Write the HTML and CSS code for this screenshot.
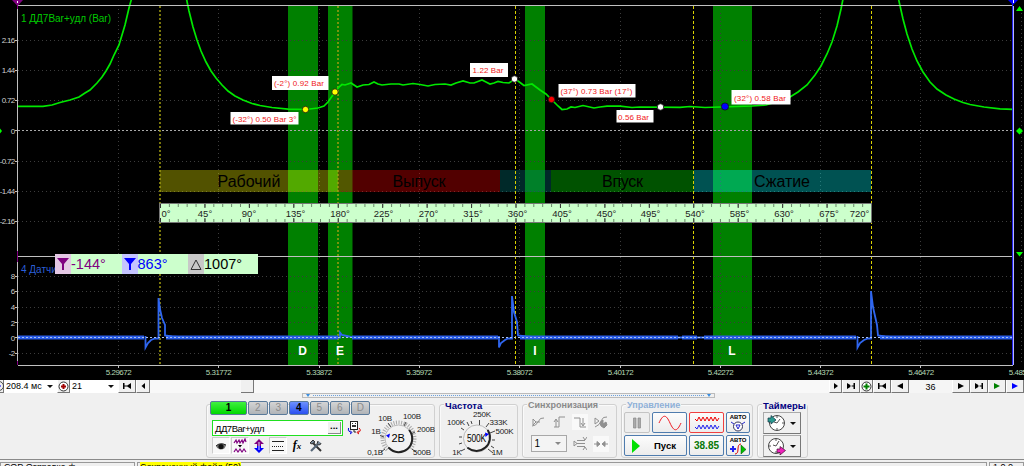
FILE: index.html
```
<!DOCTYPE html>
<html lang="ru">
<head>
    <meta charset="UTF-8">
    <title>Осциллограф</title>
    <link rel="stylesheet" href="styles.css">
</head>
<body>
<div class="app">
    <div class="scope">
        <svg class="plot" width="1024" height="380" viewBox="0 0 1024 380">
            <!-- зоны -->
            <g class="zones">
                <rect x="288" y="6" width="30" height="359"/>
                <rect x="328" y="6" width="24.500" height="359"/>
                <rect x="525" y="6" width="20" height="359"/>
                <rect x="713" y="6" width="39" height="359"/>
            </g>
            <!-- сетка -->
            <path class="grid" d="M18 40.500H1013M18 70.500H1013M18 100.500H1013M18 161.500H1013M18 191.500H1013M18 221.500H1013M18 276.500H1013M18 291.500H1013M18 307.500H1013M18 322.500H1013M18 353.500H1013"/>
            <path class="grid" d="M118.500 9V365M218.500 9V365M319.500 9V365M419.500 9V365M519.500 9V365M620.500 9V365M720.500 9V365M820.500 9V365M920.500 9V365M1021.500 9V365"/>
            <path class="zero" d="M18 130.500H1013"/>

            <!-- такты -->
            <g class="strokes">
                <rect x="160" y="170" width="178" height="22" fill="#ff0"/>
                <rect x="338" y="170" width="162" height="22" fill="#f00"/>
                <rect x="500" y="170" width="51" height="22" fill="#008080"/>
                <rect x="551" y="170" width="143" height="22" fill="#0f0"/>
                <rect x="694" y="170" width="177" height="22" fill="#0ff"/>
            </g>
            <g class="stroke-names">
                <text x="249" y="187" textLength="63">Рабочий</text>
                <text x="419" y="187" textLength="53">Выпуск</text>
                <text x="622.500" y="187" textLength="41">Впуск</text>
                <text x="782" y="187" textLength="56">Сжатие</text>
            </g>

            <path class="angle wide" d="M160 6V365M338 6V365"/>
            <path class="angle" d="M515.500 6V365M693.500 6V365M871.500 6V365"/>

            <!-- шкала углов -->
            <rect class="ruler" x="159.500" y="203.500" width="712" height="19"/>
            <path class="tick minor" d="M160 205.500H871M160 220.500H871"/>
            <path class="tick major" d="M160 206H871M160 220H871"/>
            <g class="ruler-text">
                <text x="161.500" y="217">0°</text>
                <text x="205" y="217">45°</text><text x="249" y="217">90°</text>
                <text x="295.500" y="217">135°</text><text x="340" y="217">180°</text>
                <text x="383.500" y="217">225°</text><text x="428.500" y="217">270°</text>
                <text x="473" y="217">315°</text><text x="517.500" y="217">360°</text>
                <text x="562" y="217">405°</text><text x="606.500" y="217">450°</text>
                <text x="650.500" y="217">495°</text><text x="695" y="217">540°</text>
                <text x="739.500" y="217">585°</text><text x="784" y="217">630°</text>
                <text x="829" y="217">675°</text><text x="859.500" y="217">720°</text>
            </g>

            <!-- давление -->
            <path class="pressure" d="M18 106.300H43L52 105L60 102.500L70 100L79 97L85 93L90 90L97 83L102 77L106 71L110 64L114 55L119 45L122 35L125 25L129 8L131.500 -1"/>
            <path class="pressure" d="M186.500 -1L189 11L193 27L197 40L201 51L206 62L211 71L216 78L222 85L228 91L235 96L243 100L252 103.500L260 105.500L272 107.500L288 109.200L306 109.500L318 108L324 106L328 102L335 92L339 87L342 84.500L345 85L348 84L351 83L354 85L357 87L363 85L369 84.500L374 82L378 84L382 85L391 84L399 84L403 85L413 83.500L420 84.500L428 86L435 84.500L445 84L451 85L456 83L463 81L470 83L474 83L482 80L486 82L490 84L494 83L498 81.500L503 82.500L509 83L515 79L518 81L524 85.500L532 84L540 90L546 94L551 99L558 106L562 109.500L567 109L571 107L575 107.500L583 105.500L594 108L600 107L607 106.200H620L632 107.500L640 107L680 107.300L690 106.500L705 107.500L752 106L766 105L776 102L790 97L798 92L807 85L815 75L821 66L827 54L832 42L837 26L841 9L843 -1"/>
            <path class="pressure" d="M898.500 -1L903 19L907 34L912 49L917 61L923 72L930 82L937 89L946 95L954 99L963 102.500L970 104.500L984 107L1000 108.800L1013 109.300"/>

            <!-- синхронизация -->
            <path class="sync-base" d="M18 337.500H144M166 337.500H338M352 337.500H498M520 337.500H678M682 337.500H697M704 337.500H856M880 337.500H1013"/>
            <path class="sync" d="M145.500 336V347.500L148 343L151 340L155 338.500H158.500V298L160 309L162 318L165 325V335.500L172 336.500L184 337.500"/>
            <path class="sync" d="M330 337.500H340V332.500L342 335L349 336.500L353 337.500"/>
            <path class="sync" d="M499 336V347.500L501 343L505 340L508 338.500H512V296L514 312L517 322L518 335.500L526 336.500L538 337.500"/>
            <path class="sync" d="M857.500 336V347.500L860 343L864 340L868 338.500H871V291L873 307L877 325L878 335.500L885 336.500L896 337.500M677 337.500H706"/>
            <path class="sync-dots" d="M18 337.500H1013"/>

            <!-- рамка и оси -->
            <path class="frame" d="M18 5.500H1013M18 256.500H1013M17.500 8V365M18 365.500H1013M118.500 365V368M218.500 365V368M319.500 365V368M419.500 365V368M519.500 365V368M620.500 365V368M720.500 365V368M820.500 365V368M920.500 365V368"/>
            <path class="frame" d="M15 40.500H17M15 70.500H17M15 100.500H17M15 130.500H17M15 161.500H17M15 191.500H17M15 221.500H17M15 276.500H17M15 291.500H17M15 307.500H17M15 322.500H17M15 337.500H17M15 353.500H17"/>
            <path stroke="#800080" d="M17.500 0V9M17.500 251V262M17.500 361V365"/>
            <path fill="#800080" d="M12 0H23L17.500 6Z"/>
            <path stroke="#fff" d="M17.500 1V3"/>
            <path stroke="#2222ee" d="M1012.500 4V365"/>
            <path stroke="#b4b4ff" d="M1013.500 6V365"/>
            <path fill="#0000ff" d="M1008 0H1018L1013 5Z"/>
            <path stroke="#fff" d="M1013.500 0V3"/>
            <path fill="#00ff00" d="M1019.500 6L1023 11H1016ZM1016 252H1023L1019.500 256.500ZM1016 131L1019.500 127.500L1023 131L1019.500 134.500ZM0 128.500L2 131L0 133.500Z"/>

            <g class="axis">
                <text x="14.500" y="43">2.16</text><text x="14.500" y="73">1.44</text>
                <text x="14.500" y="103">0.72</text><text x="14.500" y="133.500">0</text>
                <text x="14.500" y="164">-0.72</text><text x="14.500" y="194">-1.44</text>
                <text x="14.500" y="224">-2.16</text>
                <text x="14.500" y="279">8</text><text x="14.500" y="294">6</text>
                <text x="14.500" y="310">4</text><text x="14.500" y="325.500">2</text>
                <text x="14.500" y="340.500">0</text><text x="14.500" y="356">-2</text>
            </g>
            <g class="time">
                <text x="118.500" y="375">5.29672</text><text x="218.500" y="375">5.31772</text>
                <text x="319" y="375">5.33872</text><text x="419" y="375">5.35972</text>
                <text x="519.500" y="375">5.38072</text><text x="620.500" y="375">5.40172</text>
                <text x="720.500" y="375">5.42272</text><text x="820.500" y="375">5.44372</text>
                <text x="921" y="375">5.46472</text><text x="1021.500" y="375">5.48572</text>
            </g>
            <text class="channel" x="21" y="22" fill="#00c800" textLength="90">1 ДД7Bar+удл (Bar)</text>
            <text class="channel" x="21" y="273" fill="#2b5fd8">4 Датчик</text>
            <g class="zone-names">
                <text x="302.500" y="355">D</text><text x="340" y="355">E</text>
                <text x="535" y="355">I</text><text x="732" y="355">L</text>
            </g>

            <!-- метки -->
            <g class="note">
                <rect x="272" y="76" width="56.500" height="14"/><text x="274" y="86" textLength="50">(-2°) 0.92 Bar</text>
                <rect x="230.500" y="112" width="68" height="12.500"/><text x="232.500" y="121.500" textLength="64">(-32°) 0.50 Bar 3°</text>
                <rect x="470" y="63" width="38" height="14"/><text x="472.500" y="73" textLength="31">1.22 Bar</text>
                <rect x="558.500" y="84" width="77" height="13.500"/><text x="560.500" y="93.500" textLength="72">(37°) 0.73 Bar (17°)</text>
                <rect x="616.500" y="110" width="37" height="12.500"/><text x="618" y="119.500" textLength="31">0.56 Bar</text>
                <rect x="731.500" y="90" width="59" height="14.500"/><text x="734" y="100.500" textLength="52">(32°) 0.58 Bar</text>
            </g>
            <g stroke="#111" stroke-width=".8">
                <circle cx="305.500" cy="109.500" r="3.200" fill="#ffff00"/>
                <circle cx="335" cy="92" r="3.200" fill="#ffff00"/>
                <circle cx="514.500" cy="79" r="3.200" fill="#fff"/>
                <circle cx="551.500" cy="99.500" r="3.200" fill="#f00"/>
                <circle cx="660.500" cy="107" r="3.200" fill="#fff"/>
                <circle cx="725" cy="106.500" r="3.600" fill="#00f"/>
            </g>
        </svg>

        <div class="readout">
            <span class="mark pink"><svg width="12" height="14"><path fill="#800080" d="M0 1H12L7 7V13H5V7Z"/></svg></span>
            <span class="value purple">-144°</span>
            <span class="mark blue"><svg width="12" height="14"><path fill="#0000ff" d="M0 1H12L7 7V13H5V7Z"/></svg></span>
            <span class="value navy">863°</span>
            <span class="mark grey"><svg width="12" height="14"><path fill="none" stroke="#333" d="M1 12.500H11L6 3Z"/></svg></span>
            <span class="value">1007°</span>
        </div>
    </div>

    <div class="navbar">
        <div class="btn w4"><svg width="4" height="12"><circle cx="-1" cy="6" r="4.500" fill="none" stroke="#444"/><path stroke="#00f" d="M0 6H1"/></svg></div>
        <div class="combo w53"><span>208.4 мс</span><i class="arrow"></i></div>
        <div class="btn w13"><svg width="11" height="11"><circle cx="5.500" cy="5.500" r="4.500" fill="#fff" stroke="#333"/><path stroke="#a00000" stroke-width="2" d="M3 5.500H8M5.500 3V8"/></svg></div>
        <div class="combo w48"><span>21</span><i class="arrow"></i></div>
        <div class="btn w18"><svg width="10" height="8"><path d="M1 1H2.500V7H1ZM9 1V7L4.500 4ZM2 3.500H6V4.500H2Z"/></svg></div>
        <div class="btn w14"><svg width="6" height="8"><path d="M5 1V7L1.500 4Z"/></svg></div>
        <div class="track"><div class="thumb"></div></div>
        <div class="btn w13"><svg width="6" height="8"><path d="M1 1V7L5 4Z"/></svg></div>
        <div class="btn w18"><svg width="10" height="8"><path d="M1 1V7L6 4ZM7.500 1H9V7H7.500ZM4 3.500H8V4.500H4Z"/></svg></div>
        <div class="btn w13"><svg width="11" height="11"><circle cx="5.500" cy="5.500" r="4.500" fill="#fff" stroke="#333"/><path stroke="#008000" stroke-width="2" d="M2.500 5.500H8.500M5.500 2.500V8.500"/></svg></div>
        <div class="btn w18"><svg width="10" height="8"><path d="M1 1H2.500V7H1ZM9 1V7L4.500 4ZM2 3.500H6V4.500H2Z"/></svg></div>
        <div class="btn w18"><svg width="8" height="8"><path d="M7 1V7L1 4Z"/></svg></div>
        <div class="page">36</div>
        <div class="btn w18"><svg width="8" height="8"><path d="M1 1V7L7 4Z"/></svg></div>
        <div class="btn w18"><svg width="10" height="8"><path d="M1 1V7L6 4ZM7.500 1H9V7H7.500ZM4 3.500H8V4.500H4Z"/></svg></div>
        <div class="btn w18"><svg width="8" height="8"><path fill="#008000" d="M1 1V7L7 4Z"/></svg></div>
        <div class="btn w18"><svg width="8" height="8"><path fill="#0000ff" d="M1 1V7L7 4Z"/></svg></div>
    </div>

    <div class="panel">
        <div class="splitter"><i></i><b></b><i></i></div>
        <div class="groups">
            <div class="group channels">
                <div class="chan-left">
                    <div class="tabs">
                        <span class="tab first">1</span><span class="tab">2</span><span class="tab">3</span><span class="tab active">4</span><span class="tab">5</span><span class="tab">6</span><span class="tab">D</span>
                    </div>
                    <div class="name-row">
                        <div class="name"><span>ДД7Bar+удл</span><b>...</b></div>
                        <svg width="15" height="15" viewBox="0 0 15 15"><rect x="3.500" y="1.500" width="7" height="8" fill="#fff" stroke="#222"/><path d="M5 5H9V7H5ZM5 3H6V4H5ZM8 3H9V4H8Z" fill="#333"/><path d="M7 10V12H9" stroke="#222" fill="none"/><path d="M1.500 8Q0 11 4 12.500M3 10.500L5 12.500L3 14" stroke="#0000dd" fill="none"/><path d="M12 8Q15 11 11 12.500M12 10.500L10 12.500L12 14" stroke="#dd0000" fill="none"/></svg>
                    </div>
                    <div class="tools">
                        <span class="tool on"><svg width="14" height="14"><path d="M2 7Q6 3 12 6Q11 11 6 10.500Q3 10 2 7Z" fill="#777"/><circle cx="7" cy="7.500" r="2.600" fill="#111"/><path d="M2 7Q6 3 12 6" fill="none" stroke="#222"/></svg></span>
                        <span class="tool on"><svg width="14" height="16"><path d="M1 5L3 2L4 5L6 2L7 5L9 2L10 5L12 1L13 4M1 14L3 11L5 14L7 11L9 14L11 11L13 14" fill="none" stroke="#800080" stroke-width="1.200"/><path d="M5 7H9L7 9.500Z"/></svg></span>
                        <span class="tool"><svg width="14" height="16"><path d="M7 1L12 6H9V8H5V6H2Z" fill="#800080"/><path d="M7 15L12 10H9V8H5V10H2Z" fill="#0000ff"/><path d="M7 4V12" stroke="#ddf"/></svg></span>
                        <span class="tool on"><svg width="14" height="14"><path d="M1 2.500H13M1 11.500H13" stroke="#222"/><path d="M1 7.500H13" stroke="#222" stroke-dasharray="1 1"/></svg></span>
                        <span class="tool fx">f<small>x</small></span>
                        <span class="tool"><svg width="14" height="14"><path d="M3 3L12 12" stroke="#333" stroke-width="2"/><path d="M2 12L9 5" stroke="#567" stroke-width="2.200"/><path d="M9 2Q7 5 9.500 6Q12 6 12 4M1 4L4 1L6 3L3 5Z" stroke="#333" fill="#789"/></svg></span>
                    </div>
                </div>
                <svg class="knob" width="73" height="52" viewBox="362 405 73 52">
                    <path class="scale" d="M387.200 449.800A16 16 0 1 1 409.800 449.800"/>
                    <path class="pins" d="M385 449L381 452M384 437L380 435.500M391 427L388 423M404 426L406 422M411 434L415 432M412 449L416 452"/>
                    <circle class="cap" cx="398.500" cy="438.500" r="13.500"/>
                    <path class="shade" d="M409.500 430.500A13.500 13.500 0 0 1 389 448"/>
                    <path fill="#0000ff" d="M386 435.500L390 433.500L389 438Z"/>
                    <text class="big" x="398" y="442">2В</text>
                    <text x="385" y="421">10В</text><text x="412" y="418.500">100В</text>
                    <text x="426" y="431.500">200В</text><text x="376" y="433.500">1В</text>
                    <text x="375" y="454.500">0,1В</text><text x="422" y="454.500">500В</text>
                </svg>
            </div>

            <div class="group freq">
                <div class="title">Частота</div>
                <svg class="knob" width="77" height="52" viewBox="440 405 77 52">
                    <path class="pins" d="M465 449L461 451M462 443L459 444M462 437H459M464 430L461 428M469 426L467 422M479.500 425V420M486 427L489 423M490 433L495 431M492 440H495M491 446L494 448M488 449L493 453M472 424L471 421"/>
                    <circle class="cap" cx="477" cy="438.500" r="13.500"/>
                    <path class="shade" d="M488 430.500A13.500 13.500 0 0 1 468 448"/>
                    <path fill="#0000ff" d="M489 434L485 432.500L485.500 437Z"/>
                    <text class="big" x="476.500" y="442" textLength="19" lengthAdjust="spacingAndGlyphs">500K</text>
                    <text x="456" y="424.500">100K</text><text x="482" y="417">250K</text>
                    <text x="498.500" y="424.500">333K</text><text x="504.500" y="433.500">500K</text>
                    <text x="457" y="454.500">1K</text><text x="497" y="454.500">1M</text>
                </svg>
            </div>

            <div class="group syncro">
                <div class="title grey">Синхронизация</div>
                <div class="sync-grid">
                    <svg width="14" height="14"><path d="M1 11Q5 11 7 7Q9 2 13 3M2 4V10L5 7ZM5 7H9"/></svg>
                    <svg width="14" height="14"><path d="M2 12H7V2H13M4 12V5M2 7L4 4L6 7"/></svg>
                    <svg class="lit" width="14" height="14"><path d="M1 3H7V12H13M10 3V10M8 8L10 11L12 8"/></svg>
                    <svg width="14" height="14"><path d="M1 3V9L5 6ZM1 12Q6 10 7 6Q9 1 13 2"/><path class="solid" d="M6 8L9 5V9L12 7L13 10L10 13L7 11Z"/></svg>
                    <div class="select"><span>1</span><i class="arrow"></i></div>
                    <svg width="14" height="14"><path d="M1 4V9L4 6.500ZM4 3.500H12M4 6.500H12M4 9.500H12M10 0L12 3L14 0M10 13L12 10L14 13"/></svg>
                    <svg class="lit" width="14" height="14"><path d="M0 7H5M14 7H9"/><path class="solid" d="M3 4.500L6 7L3 9.500ZM11 4.500L8 7L11 9.500Z"/></svg>
                </div>
            </div>

            <div class="group control">
                <div class="title light">Управление</div>
                <div class="control-grid">
                    <div class="key off"><svg width="10" height="12"><path d="M1.500 1H4V11H1.500ZM6 1H8.500V11H6Z" fill="#aaa" stroke="#888" stroke-width=".7"/></svg></div>
                    <div class="key"><svg width="26" height="16"><path d="M2 8C6 -1 9 -1 13 8S20 17 24 8" fill="none" stroke="#ee1c24"/></svg></div>
                    <div class="key red"><svg width="26" height="16"><path d="M1 4L3 6L5 2L7 6L9 2L11 6L13 2L15 6L17 2L19 6L21 2L23 6L25 3" fill="none" stroke="#e00"/><path d="M1 12L3 14L5 10L7 14L9 10L11 14L13 10L15 14L17 10L19 14L21 10L23 14L25 11" fill="none" stroke="#22e"/></svg></div>
                    <div class="key auto"><b>АВТО</b><svg width="14" height="12"><circle cx="7" cy="6.500" r="4.500" fill="#fff" stroke="#335"/><path d="M5 5H9L7 9ZM0 2L3 4M14 2L11 4" fill="none" stroke="#22c"/></svg></div>
                    <div class="key start"><svg width="10" height="14"><path d="M1 0V14L9 7Z" fill="#00e000"/></svg><b>Пуск</b></div>
                    <div class="key load">38.85</div>
                    <div class="key auto"><b>АВТО</b><svg width="16" height="12"><path d="M0 6H6M3 3V9" stroke="#22e" stroke-width="2"/><path d="M5 11Q8 11 8 6Q8 1 11 1" stroke="#d00" fill="none"/><path d="M11 2V11L16 6.500Z" fill="#00c000" stroke="#040" stroke-width=".5"/></svg></div>
                </div>
            </div>

            <div class="group timers">
                <div class="title">Таймеры</div>
                <div class="timer"><svg width="19" height="18"><circle cx="10" cy="9" r="7.500" fill="#fff" stroke="#444"/><path d="M10 9L13 5M10 9L7 8M10 2V4M10 14V16M15 9H17" stroke="#555"/><path d="M1 4H4V1.500L9 6L4 10V8H1Z" fill="#2a9a90" stroke="#134" stroke-width=".7"/></svg><i class="arrow"></i></div>
                <div class="timer"><svg width="19" height="18"><circle cx="9" cy="9" r="7.500" fill="#fff" stroke="#444"/><path d="M9 9L12 4M9 9L6 8M9 2V4M9 14V16M2 9H4" stroke="#555"/><path d="M10 12H13V9.500L18.500 13.500L13 18V15.500H10Z" fill="#ee22bb" stroke="#413" stroke-width=".7"/></svg><i class="arrow"></i></div>
            </div>
        </div>
    </div>

    <div class="status">
        <div class="cell s1">СОР Отправка ф</div>
        <div class="cell s2"><mark>Сохраненный файл (50)</mark></div>
        <div class="cell s3">1.0.0</div>
    </div>
</div>
</body>
</html>
```
FILE: styles.css
```
* {
    box-sizing: border-box;
}
body {
    margin: 0;
    font-family: "Liberation Sans", Arial, sans-serif;
    font-size: 9px;
    color: #000;
}
.app {
    width: 1024px;
    height: 466px;
    overflow: hidden;
    display: flex;
    flex-direction: column;
    background: #f0f0f0;
}
svg {
    display: block;
    flex: none;
}

/* --- график --- */
.scope {
    position: relative;
    height: 380px;
    background: #000;
}
.plot text {
    font-size: 9px;
}
.zones rect {
    fill: #008000;
}
.grid {
    stroke: #3c3c3c;
    stroke-dasharray: 1 3;
    fill: none;
}
.zero {
    stroke: #aaa;
    stroke-dasharray: 2 2;
}
.strokes rect {
    fill-opacity: .32;
}
.plot .stroke-names text {
    font-size: 16px;
    text-anchor: middle;
    fill: #000;
}
.angle {
    stroke: #d8d000;
    stroke-dasharray: 3 2;
}
.angle.wide {
    stroke: #a09c10;
    stroke-width: 1.500px;
    stroke-dasharray: 2 2;
}
.ruler {
    fill: #ccffcc;
    stroke: #777;
}
.tick {
    stroke: #6b8a6b;
}
.tick.minor {
    stroke-width: 3px;
    stroke-dasharray: 1 7.888;
}
.tick.major {
    stroke: #333;
    stroke-width: 4px;
    stroke-dasharray: 1 43.438;
}
.plot .ruler-text text {
    font-size: 9.500px;
    text-anchor: middle;
    fill: #222;
}
.plot .ruler-text text:first-child {
    text-anchor: start;
}
.pressure {
    fill: none;
    stroke: #00e800;
    stroke-width: 1.700px;
}
.sync {
    fill: none;
    stroke: #2f66f0;
    stroke-width: 1.800px;
}
.sync-base {
    stroke: #2a5ce6;
    stroke-width: 4px;
}
.sync-dots {
    stroke: #a8c0ee;
    stroke-dasharray: 2 2;
}
.frame {
    stroke: #c0c0c0;
    fill: none;
}
.plot .axis text {
    font-size: 8px;
    letter-spacing: -.7px;
    text-anchor: end;
    fill: #d0d0d0;
}
.plot .time text {
    font-size: 8px;
    letter-spacing: -.5px;
    text-anchor: middle;
    fill: #b4d8b4;
}
.plot .channel {
    font-size: 10px;
}
.plot .zone-names text {
    font-size: 12px;
    font-weight: bold;
    text-anchor: middle;
    fill: #fff;
}
.note rect {
    fill: #fff;
}
.plot .note text {
    font-size: 8px;
    fill: #f01818;
}

/* --- курсоры --- */
.readout {
    position: absolute;
    left: 55px;
    top: 254px;
    width: 203px;
    height: 20px;
    display: flex;
    background: #ccffcc;
}
.mark {
    width: 16px;
    display: flex;
    align-items: center;
    justify-content: center;
}
.pink {
    background: #e4c8e4;
}
.blue {
    background: #c4c4ff;
}
.mark.grey {
    background: #c8c8c8;
}
.value {
    width: 50.500px;
    font-size: 14.500px;
    line-height: 20px;
}
.purple {
    color: #800080;
}
.navy {
    color: #0000ff;
}

/* --- навигация --- */
.navbar {
    height: 13px;
    display: flex;
    background: #fafafa;
}
.btn {
    flex: none;
    display: flex;
    align-items: center;
    justify-content: center;
    background: #f0f0f0;
    border-right: 1px solid #777;
    border-bottom: 1px solid #777;
    border-left: 1px solid #fff;
}
.w4 { width: 4px; }
.w13 { width: 13px; }
.w14 { width: 14px; }
.w18 { width: 18px; }
.w48 { width: 48px; }
.w53 { width: 53px; }
.btn.w4 {
    border-left: 0;
}
.combo {
    display: flex;
    align-items: center;
    justify-content: space-between;
    padding: 0 4px 0 2px;
    background: #fff;
    line-height: 13px;
}
.arrow {
    border: 3px solid transparent;
    border-top-color: #111;
    border-bottom: 0;
}
.track {
    flex: 1;
    padding-left: 91px;
    background: #f8f8f8;
}
.thumb {
    width: 13px;
    height: 13px;
    background: #f0f0f0;
    border-right: 1px solid #777;
    border-bottom: 1px solid #777;
}
.page {
    width: 43px;
    background: #f5f5f5;
    text-align: center;
    line-height: 14px;
    font-size: 9px;
}

/* --- панель управления --- */
.panel {
    height: 66px;
}
.splitter {
    width: 413px;
    height: 5px;
    margin-left: 302px;
    padding: 0 3px;
    display: flex;
    align-items: center;
    gap: 3px;
    border: 1px solid #bbb;
}
.splitter i {
    border: 2.500px solid transparent;
    border-top: 3px solid #3b8ee0;
    border-bottom: 0;
}
.splitter b {
    flex: 1;
    border-top: 1px dotted #6aa0dd;
}
.groups {
    display: flex;
    gap: 4px;
    margin: 6px 0 0 206px;
}
.group {
    height: 54px;
    border: 1px solid #d0d0d0;
    border-radius: 3px;
    box-shadow: inset 1px 1px 0 #fafafa;
}
.title {
    width: max-content;
    height: 9px;
    margin: -4px 0 0 4px;
    padding: 0 1px;
    background: #f0f0f0;
    font-size: 9.500px;
    font-weight: bold;
    line-height: 9px;
    color: #000080;
    white-space: nowrap;
}
.title.grey {
    color: #8a8a8a;
    font-size: 9px;
}
.title.light {
    color: #8fb0d8;
    font-size: 9px;
}
.channels {
    width: 229px;
    display: flex;
}
.chan-left {
    width: 155px;
    padding-left: 3px;
}
.tabs {
    width: 162px;
    height: 14px;
    margin-top: -4px;
    display: flex;
    gap: 1px;
    position: relative;
}
.tab {
    width: 19.500px;
    border: 1px solid #5a7a9a;
    border-radius: 2px;
    background: linear-gradient(#d4d4d4, #b0b4b8);
    color: #8c8c8c;
    font-size: 10px;
    line-height: 12px;
    text-align: center;
}
.tab.first {
    width: 37px;
    background: linear-gradient(#40f040, #00d800);
    color: #000;
    font-weight: bold;
}
.tab.active {
    background: linear-gradient(#6c90ff, #2a50f0);
    color: #000;
    font-weight: bold;
}
.name-row {
    display: flex;
    gap: 4px;
    margin: 5px 0 0 2px;
}
.name {
    width: 134px;
    height: 16px;
    display: flex;
    justify-content: space-between;
    padding: 1px 1px 1px 2px;
    border: 1px solid #20e020;
    background: #fff;
    font-size: 9.500px;
    letter-spacing: -.5px;
    line-height: 13px;
}
.name b {
    width: 13px;
    background: #f0f0f0;
    border-right: 1px solid #888;
    border-bottom: 1px solid #888;
    letter-spacing: 0;
    line-height: 8px;
    text-align: center;
}
.tools {
    display: flex;
    gap: 1px;
    margin: 1px 0 0 2px;
}
.tool {
    width: 18px;
    height: 17px;
    display: flex;
    align-items: center;
    justify-content: center;
}
.tool.on {
    background: #f8f8f8;
    border: 1px solid #ccc;
    border-right-color: #fff;
    border-bottom-color: #fff;
}
.fx {
    font: italic bold 12px "Liberation Serif", serif;
}
.fx small {
    font-size: 9px;
}
.knob text {
    font-size: 8px;
    letter-spacing: -.2px;
    text-anchor: middle;
    fill: #222;
}
.knob .big {
    font-size: 11px;
    fill: #000;
}
.scale {
    fill: none;
    stroke: #a8a8a8;
    stroke-width: 4px;
    stroke-dasharray: 1 1.500;
}
.pins {
    stroke: #444;
}
.cap {
    fill: #f2f2f2;
    stroke: #bbb;
}
.shade {
    fill: none;
    stroke: #222;
    stroke-width: 2px;
    stroke-linecap: round;
}
.freq {
    width: 79px;
}
.freq .knob {
    margin-top: -5px;
}
.syncro {
    width: 95px;
}
.sync-grid {
    display: grid;
    grid-template-columns: repeat(4, 16px);
    gap: 5px;
    padding: 4px 0 0 7px;
    justify-items: center;
    align-items: center;
}
.sync-grid svg {
    width: 16px;
    height: 16px;
    padding: 1px;
    fill: none;
    stroke: #909090;
}
.sync-grid .solid {
    fill: #909090;
}
.lit {
    background: #f9f9f9;
}
.select {
    grid-column: span 2;
    width: 36px;
    height: 17px;
    display: flex;
    align-items: center;
    justify-content: space-between;
    padding: 0 5px 0 3px;
    border: 1px solid #a8a8a8;
    background: #f4f4f4;
    font-size: 10px;
}
.select .arrow {
    border-top-color: #888;
}
.control {
    width: 132px;
}
.control-grid {
    display: grid;
    grid-template-columns: 26px 35px 35px 24px;
    grid-template-rows: 21px 21px;
    gap: 2px;
    padding: 2px 0 0 2px;
}
.key {
    display: flex;
    align-items: center;
    justify-content: center;
    border: 1px solid #4f7cae;
    border-radius: 2px;
    background: linear-gradient(#fcfcfc, #ececec);
    overflow: hidden;
}
.key.off {
    border-color: #c4c4c4;
    background: #eee;
}
.key.red {
    border-color: #f04040;
}
.start {
    grid-column: span 2;
    justify-content: flex-start;
    gap: 13px;
    padding-left: 6px;
    font-size: 9.500px;
}
.load {
    color: #087808;
    font-size: 10px;
    font-weight: bold;
}
.auto {
    flex-direction: column;
    font-size: 6px;
    line-height: 6px;
}
.timers {
    width: 51px;
}
.timer {
    width: 38px;
    height: 22px;
    display: flex;
    align-items: center;
    gap: 4px;
    margin: 2px 0 0 5px;
    padding-left: 3px;
    border: 1px solid #aaa;
    border-right-color: #777;
    border-bottom-color: #777;
}
.timer + .timer {
    margin-top: 1px;
}

/* --- строка состояния --- */
.status {
    height: 7px;
    display: flex;
    gap: 2px;
    padding-top: 2px;
    border-top: 1px solid #8a8a8a;
    overflow: hidden;
}
.cell {
    border: 1px solid #999;
    border-bottom: 0;
    padding: 0 3px;
    line-height: 9px;
    white-space: nowrap;
}
.s1 {
    width: 135px;
}
.s2 {
    width: 850px;
    padding-left: 2px;
}
.s3 {
    flex: 1;
}
mark {
    background: #ffff00;
}
```
